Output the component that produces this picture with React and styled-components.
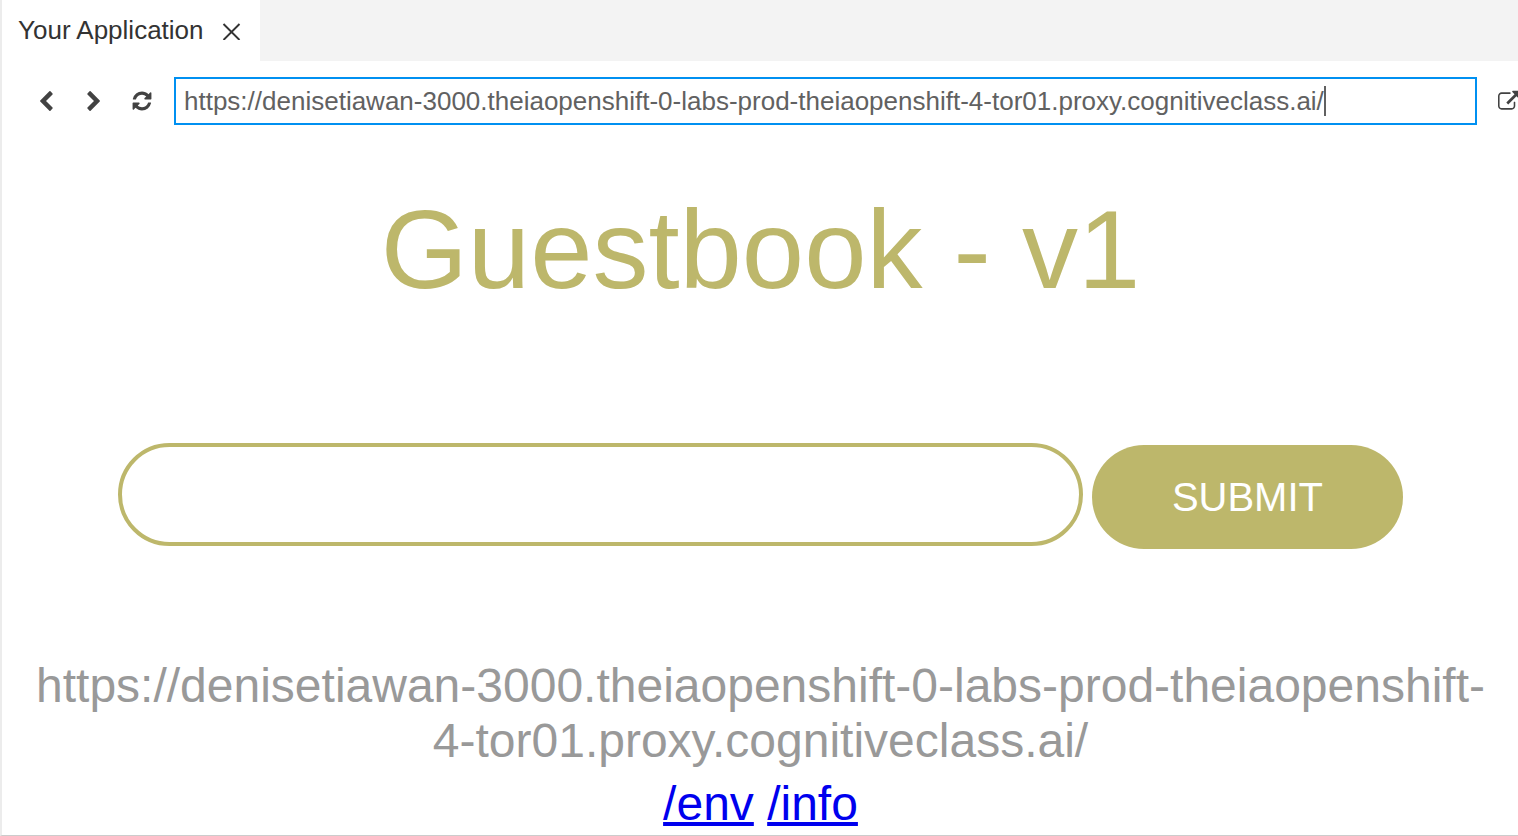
import React, { useState } from "react";
import styled, { createGlobalStyle } from "styled-components";

const GlobalStyle = createGlobalStyle`
  *, *::before, *::after { box-sizing: border-box; }
  body {
    margin: 0;
    background: #ffffff;
    font-family: "Liberation Sans", Arial, Helvetica, sans-serif;
  }
`;

const Panel = styled.div`
  display: flex;
  flex-direction: column;
  min-height: 100vh;
  overflow: hidden;
  border-left: 2px solid #ececec;
  border-bottom: 1px solid #cccccc;
`;

const TabBar = styled.div`
  display: flex;
  height: 61px;
  background: #f3f3f3;
`;

const Tab = styled.div`
  display: flex;
  align-items: center;
  gap: 18px;
  padding: 0 18px 2px 16px;
  background: #ffffff;
  color: #333333;
  font-size: 26px;
  line-height: 30px;
  white-space: nowrap;
`;

const IconButton = styled.button`
  display: flex;
  flex: none;
  padding: 0;
  border: 0;
  background: none;
  color: #424242;
  cursor: pointer;
`;

const Icon = styled.svg`
  display: block;
  width: ${(p) => p.$size}px;
  height: ${(p) => p.$size}px;
  fill: currentColor;
`;

const Toolbar = styled.div`
  display: flex;
  align-items: center;
  gap: 21px;
  margin-right: -2px;
  padding: 16px 0 16px 33px;
`;

const NavButtons = styled.div`
  display: flex;
  gap: 26px;
`;

const AddressBox = styled.div`
  display: flex;
  flex: 1;
  align-items: center;
  min-width: 0;
  height: 48px;
  padding: 0 8px;
  border: 2px solid #0090f1;
`;

const AddressInput = styled.input`
  field-sizing: content;
  min-width: 0;
  padding: 0;
  border: 0;
  outline: 0;
  background: none;
  color: #616161;
  font: 26px/30px "Liberation Sans", Arial, sans-serif;
`;

const Caret = styled.span`
  flex: none;
  width: 2px;
  height: 30px;
  background: #616161;
`;

const Main = styled.main`
  display: flex;
  flex-direction: column;
  padding: 45px 15px 3px 16px;
  text-align: center;
`;

const Title = styled.h1`
  margin: 0 0 129px;
  color: #bdb76b;
  font-size: 112px;
  font-weight: 400;
  line-height: 128px;
`;

const EntryForm = styled.form`
  display: flex;
  align-items: baseline;
  gap: 9px;
  margin: 0 100px 109px;
`;

const EntryInput = styled.input`
  flex: 1;
  min-width: 0;
  height: 103px;
  padding: 0 48px;
  border: 4px solid #bdb76b;
  border-radius: 52px;
  outline: 0;
  background: #ffffff;
  color: #bdb76b;
  font: 48px/56px "Liberation Sans", Arial, sans-serif;
`;

const SubmitButton = styled.button`
  flex: none;
  height: 104px;
  padding: 0 80px;
  border: 0;
  border-radius: 52px;
  background: #bdb76b;
  color: #ffffff;
  font: 40px/46px "Liberation Sans", Arial, sans-serif;
  cursor: pointer;
`;

const HostAddress = styled.p`
  margin: 0 0 8px;
  color: #999999;
  font-size: 48px;
  line-height: 55px;
`;

const Links = styled.nav`
  font-size: 48px;
  line-height: 55px;
`;

const PageLink = styled.a`
  color: #0000ee;
  text-decoration-thickness: 4px;
  text-decoration-skip-ink: none;
`;

const address =
  "https://denisetiawan-3000.theiaopenshift-0-labs-prod-theiaopenshift-4-tor01.proxy.cognitiveclass.ai/";

const glyphs = {
  back: "M1427 301l-531 531 531 531q19 19 19 45t-19 45l-166 166q-19 19-45 19t-45-19l-742-742q-19-19-19-45t19-45l742-742q19-19 45-19t45 19l166 166q19 19 19 45t-19 45z",
  forward:
    "M1363 877l-742 742q-19 19-45 19t-45-19l-166-166q-19-19-19-45t19-45l531-531-531-531q-19-19-19-45t19-45l166-166q19-19 45-19t45 19l742 742q19 19 19 45t-19 45z",
  refresh:
    "M1639 1056q0 5-1 7-64 268-268 434.5t-478 166.5q-146 0-282.5-55t-243.5-157l-129 129q-19 19-45 19t-45-19-19-45v-448q0-26 19-45t45-19h448q26 0 45 19t19 45-19 45l-137 137q71 66 161 102t187 36q134 0 250-65t186-179q11-17 53-117 8-23 30-23h192q13 0 22.5 9.5t9.5 22.5zm25-800v448q0 26-19 45t-45 19h-448q-26 0-45-19t-19-45 19-45l138-138q-148-137-349-137-134 0-250 65t-186 179q-11 17-53 117-8 23-30 23h-199q-13 0-22.5-9.5t-9.5-22.5v-7q65-268 270-434.5t480-166.5q146 0 284 55.5t245 156.5l130-129q19-19 45-19t45 19 19 45z",
  external:
    "M1408 928v320q0 119-84.5 203.5t-203.5 84.5h-832q-119 0-203.5-84.5t-84.5-203.5v-832q0-119 84.5-203.5t203.5-84.5h704q14 0 23 9t9 23v64q0 14-9 23t-23 9h-704q-66 0-113 47t-47 113v832q0 66 47 113t113 47h832q66 0 113-47t47-113v-320q0-14 9-23t23-9h64q14 0 23 9t9 23zm384-864v512q0 26-19 45t-45 19-45-19l-176-176-652 652q-10 10-23 10t-23-10l-114-114q-10-10-10-23t10-23l652-652-176-176q-19-19-19-45t19-45 45-19h512q26 0 45 19t19 45z",
};

function ToolButton({ label, glyph, viewBox = "0 0 1792 1792" }) {
  return (
    <IconButton type="button" aria-label={label}>
      <Icon $size={22} viewBox={viewBox} aria-hidden="true">
        <path d={glyphs[glyph]} />
      </Icon>
    </IconButton>
  );
}

export default function App() {
  const [url, setUrl] = useState(address);
  const [entry, setEntry] = useState("");

  return (
    <>
      <GlobalStyle />
      <Panel>
        <TabBar>
          <Tab>
            <span>Your Application</span>
            <IconButton type="button" aria-label="Close tab">
              <Icon $size={20} viewBox="0 0 20 20" aria-hidden="true">
                <path
                  d="M1.5 4L17.5 20M17.5 4L1.5 20"
                  fill="none"
                  stroke="#333333"
                  strokeWidth="1.9"
                />
              </Icon>
            </IconButton>
          </Tab>
        </TabBar>
        <Toolbar>
          <NavButtons>
            <ToolButton label="Back" glyph="back" viewBox="0 -64 1792 1792" />
            <ToolButton
              label="Forward"
              glyph="forward"
              viewBox="0 -64 1792 1792"
            />
            <ToolButton label="Refresh" glyph="refresh" />
          </NavButtons>
          <AddressBox>
            <AddressInput
              type="text"
              aria-label="Address"
              value={url}
              onChange={(e) => setUrl(e.target.value)}
            />
            <Caret aria-hidden="true" />
          </AddressBox>
          <ToolButton
            label="Open in new window"
            glyph="external"
            viewBox="0 -64 1792 1792"
          />
        </Toolbar>
        <Main>
          <Title>Guestbook - v1</Title>
          <EntryForm onSubmit={(e) => e.preventDefault()}>
            <EntryInput
              type="text"
              aria-label="Guestbook entry"
              value={entry}
              onChange={(e) => setEntry(e.target.value)}
            />
            <SubmitButton type="submit">SUBMIT</SubmitButton>
          </EntryForm>
          <HostAddress>{address}</HostAddress>
          <Links>
            <PageLink href="/env">/env</PageLink>{" "}
            <PageLink href="/info">/info</PageLink>
          </Links>
        </Main>
      </Panel>
    </>
  );
}
